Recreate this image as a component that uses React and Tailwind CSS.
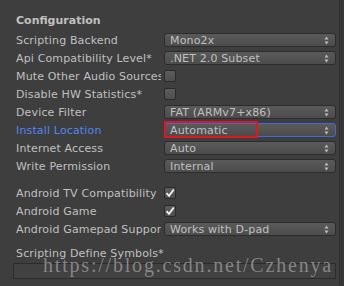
import React from 'react';

const font = { fontFamily: '"DejaVu Sans", Verdana, sans-serif' };

const Arrows = () => (
  <svg width="5" height="9" viewBox="0 0 5 9" className="shrink-0">
    <path d="M2.5 0.5 L4.5 3.5 L0.5 3.5 Z" fill="#bdbdbd" />
    <path d="M2.5 8.5 L4.5 5.5 L0.5 5.5 Z" fill="#bdbdbd" />
  </svg>
);

const Dropdown = ({ value, focused }) => (
  <div
    className={`flex h-[14px] w-[172px] items-center justify-between rounded-[3px] border bg-gradient-to-b from-[#5a5a5a] to-[#4c4c4c] pl-[5px] pr-[6px] text-[11px] leading-none tracking-[0.15px] text-[#c0c0c0] ${
      focused ? 'border-[#3d6bd8]' : 'border-[#2c2c2c]'
    }`}
  >
    <span>{value}</span>
    <Arrows />
  </div>
);

const Checkbox = ({ checked }) => (
  <div className="flex h-[12px] w-[12px] items-center justify-center rounded-[2px] border border-[#2a2a2a] bg-gradient-to-b from-[#5c5c5c] to-[#4e4e4e]">
    {checked && (
      <svg width="10" height="10" viewBox="0 0 10 10">
        <path d="M1.5 5.2 L4 7.8 L8.8 1.5" stroke="#f2f2f2" strokeWidth="1.8" fill="none" />
      </svg>
    )}
  </div>
);

const Row = ({ label, blue, children }) => (
  <div className="flex h-[18px] items-center">
    <div
      className={`mr-[3px] w-[145px] shrink-0 overflow-hidden whitespace-nowrap text-[11px] leading-none tracking-[0.15px] ${
        blue ? 'text-[#5584f2]' : 'text-[#c0c0c0]'
      }`}
    >
      {label}
    </div>
    {children}
  </div>
);

export default function App() {
  return (
    <div className="relative flex h-[286px] w-[344px] overflow-hidden bg-[#3e3e3e]" style={font}>
      <div className="flex flex-1 flex-col pl-[16px]">
        <div className="flex h-[31px] items-center pt-[10px] text-[11px] font-bold leading-none text-[#c0c0c0]">
          Configuration
        </div>
        <Row label="Scripting Backend"><Dropdown value="Mono2x" /></Row>
        <Row label="Api Compatibility Level*"><Dropdown value=".NET 2.0 Subset" /></Row>
        <Row label="Mute Other Audio Sources"><Checkbox /></Row>
        <Row label="Disable HW Statistics*"><Checkbox /></Row>
        <Row label="Device Filter"><Dropdown value="FAT (ARMv7+x86)" /></Row>
        <Row label="Install Location" blue>
          <div className="relative">
            <Dropdown value="Automatic" focused />
            <div className="absolute left-0 top-[-2px] h-[17px] w-[94px] border-2 border-[#e3141e]" />
          </div>
        </Row>
        <Row label="Internet Access"><Dropdown value="Auto" /></Row>
        <Row label="Write Permission"><Dropdown value="Internal" /></Row>
        <div className="h-[9px]" />
        <Row label="Android TV Compatibility"><Checkbox checked /></Row>
        <Row label="Android Game"><Checkbox checked /></Row>
        <Row label="Android Gamepad Support"><Dropdown value="Works with D-pad" /></Row>
        <div className="mt-[6px] flex h-[18px] items-center whitespace-nowrap text-[11px] leading-none tracking-[0.15px] text-[#c0c0c0]">
          Scripting Define Symbols*
        </div>
        <div className="-ml-[3px] mt-[1px] h-[16px] w-[323px] border border-[#2c2c2c] bg-[#414141]" />
      </div>
      <div className="w-[5px] border-l border-[#2e2e2e] bg-[#363636]" />
      <div
        className="pointer-events-none absolute left-[43px] top-[255px] whitespace-nowrap text-[20px] leading-none tracking-[1.8px] text-[#9a9a9a]/80"
        style={{ fontFamily: '"Liberation Serif", serif' }}
      >
        https://blog.csdn.net/Czhenya
      </div>
    </div>
  );
}
